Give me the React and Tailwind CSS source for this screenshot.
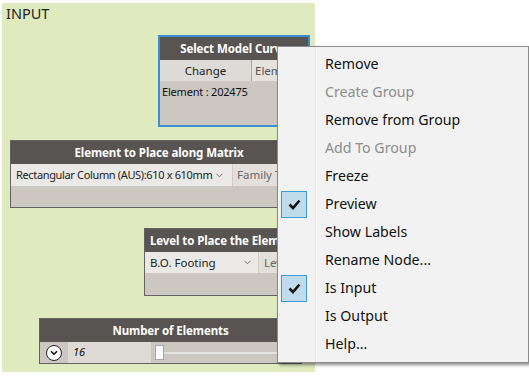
import React from "react";

const font = { fontFamily: '"Noto Sans", "Open Sans", sans-serif' };

function Check() {
  return (
    <div className="w-[26px] h-[27px] bg-[#c0dcec] border border-[#3f9bd6] flex items-center justify-center">
      <svg width="13" height="11" viewBox="0 0 13 11">
        <path d="M1.5 5.5 L5 9 L11.5 1.5" fill="none" stroke="#111" strokeWidth="2.6" strokeLinejoin="miter" />
      </svg>
    </div>
  );
}

const items = [
  ["Remove", false, false],
  ["Create Group", true, false],
  ["Remove from Group", false, false],
  ["Add To Group", true, false],
  ["Freeze", false, false],
  ["Preview", false, true],
  ["Show Labels", false, false],
  ["Rename Node...", false, false],
  ["Is Input", false, true],
  ["Is Output", false, false],
  ["Help...", false, false],
];

function Chevron() {
  return (
    <svg width="7" height="5" viewBox="0 0 7 5" className="shrink-0">
      <path d="M0.5 0.8 L3.5 3.8 L6.5 0.8" fill="none" stroke="#777" strokeWidth="1" />
    </svg>
  );
}

export default function App() {
  return (
    <div className="relative w-[529px] h-[377px] bg-white overflow-hidden" style={font}>
      {/* group */}
      <div className="absolute left-[2px] top-[3px] w-[313px] h-[369px] bg-[#dfeabe]">
        <div className="pl-[4px] pt-[1px] text-[14.5px] leading-[18px] text-[#222]">INPUT</div>
      </div>

      {/* Node 1 */}
      <div className="absolute left-[158px] top-[35px] w-[152px] border-2 border-[#3c8ed0] bg-[#ccc7c0]">
        <div className="h-[23px] bg-[#585452] text-white font-bold text-[11.5px] tracking-[-0.1px] flex items-center justify-center">Select Model Curve</div>
        <div className="flex h-[21px] text-[11.5px]">
          <div className="w-[92px] bg-[#dddbd8] border-r border-[#a9a6a2] flex items-center justify-center text-[#222]">Change</div>
          <div className="flex-1 bg-[#e6e3de] flex items-center pl-[3px] text-[#555]">Element</div>
        </div>
        <div className="h-[44px] pl-[2px] pt-[3px] text-[11px] tracking-[-0.2px] text-[#111]">Element : 202475</div>
      </div>

      {/* Node 2 */}
      <div className="absolute left-[10px] top-[140px] w-[298px] border border-[#626262] bg-[#ccc7c0]">
        <div className="h-[23px] bg-[#585452] text-white font-bold text-[11.5px] tracking-[-0.1px] flex items-center justify-center">Element to Place along Matrix</div>
        <div className="flex h-[22px] text-[11px] tracking-[-0.35px] whitespace-nowrap">
          <div className="w-[222px] shrink-0 bg-[#ebe9e6] border-r border-[#d0ccc6] flex items-center pl-[5px] pr-[9px] justify-between text-[#222]">
            <span>Rectangular Column (AUS):610 x 610mm</span>
            <Chevron />
          </div>
          <div className="flex-1 bg-[#e3e0db] flex items-center pl-[4px] text-[#666] text-[11.5px] tracking-normal">Family Type</div>
        </div>
        <div className="h-[21px]" />
      </div>

      {/* Node 3 */}
      <div className="absolute left-[144px] top-[228px] w-[172px] border border-[#626262] bg-[#ccc7c0]">
        <div className="h-[23px] bg-[#585452] text-white font-bold text-[11.5px] tracking-[-0.1px] flex items-center pl-[5px] whitespace-nowrap overflow-hidden">Level to Place the Element</div>
        <div className="flex h-[21px] text-[11.5px]">
          <div className="w-[114px] shrink-0 bg-[#ebe9e6] border-r border-[#d0ccc6] flex items-center pl-[5px] pr-[7px] justify-between text-[#222]">
            <span>B.O. Footing</span>
            <Chevron />
          </div>
          <div className="flex-1 bg-[#e3e0db] flex items-center pl-[5px] text-[#666]">Levels</div>
        </div>
        <div className="h-[22px]" />
      </div>

      {/* Node 4 */}
      <div className="absolute left-[39px] top-[318px] w-[263px] border border-[#626262] bg-[#ccc7c0]">
        <div className="h-[23px] bg-[#585452] text-white font-bold text-[11.5px] tracking-[-0.1px] flex items-center justify-center">Number of Elements</div>
        <div className="flex h-[21px] items-stretch">
          <div className="w-[28px] flex items-center justify-center">
            <div className="w-[16px] h-[16px] rounded-full bg-white border-[1.5px] border-[#222] flex items-center justify-center">
              <svg width="8" height="6" viewBox="0 0 8 6">
                <path d="M1 1.2 L4 4.2 L7 1.2" fill="none" stroke="#111" strokeWidth="1.6" />
              </svg>
            </div>
          </div>
          <div className="w-[83px] bg-[#dedbd6] flex items-center pl-[5px] text-[11px] italic text-[#111]">16</div>
          <div className="flex-1 relative flex items-center pl-[4px]">
            <div className="absolute left-[4px] right-[4px] top-[10px] h-[2px] bg-[#e6e4e0]" />
            <div className="relative w-[9px] h-[15px] bg-white border border-[#a9a6a2]" />
          </div>
        </div>
      </div>

      {/* Context menu */}
      <div className="absolute left-[277px] top-[46px] w-[252px] h-[317px] bg-[#f2f2f2] border border-[#8c8c8c] shadow-[2px_2px_3px_rgba(0,0,0,0.45)] flex">
        <div className="w-[38px] border-r border-[#e2e2e2] flex flex-col pt-[3px]">
          {items.map(([label, , checked]) => (
            <div key={label} className="h-[28px] flex items-center pl-[3px]">
              {checked ? <Check /> : null}
            </div>
          ))}
        </div>
        <div className="flex-1 border-l border-white flex flex-col pt-[3px]">
          {items.map(([label, disabled]) => (
            <div
              key={label}
              className={`h-[28px] flex items-center pl-[8px] text-[14.2px] ${disabled ? "text-[#8d8d8d]" : "text-[#111]"}`}
            >
              {label}
            </div>
          ))}
        </div>
      </div>
    </div>
  );
}
